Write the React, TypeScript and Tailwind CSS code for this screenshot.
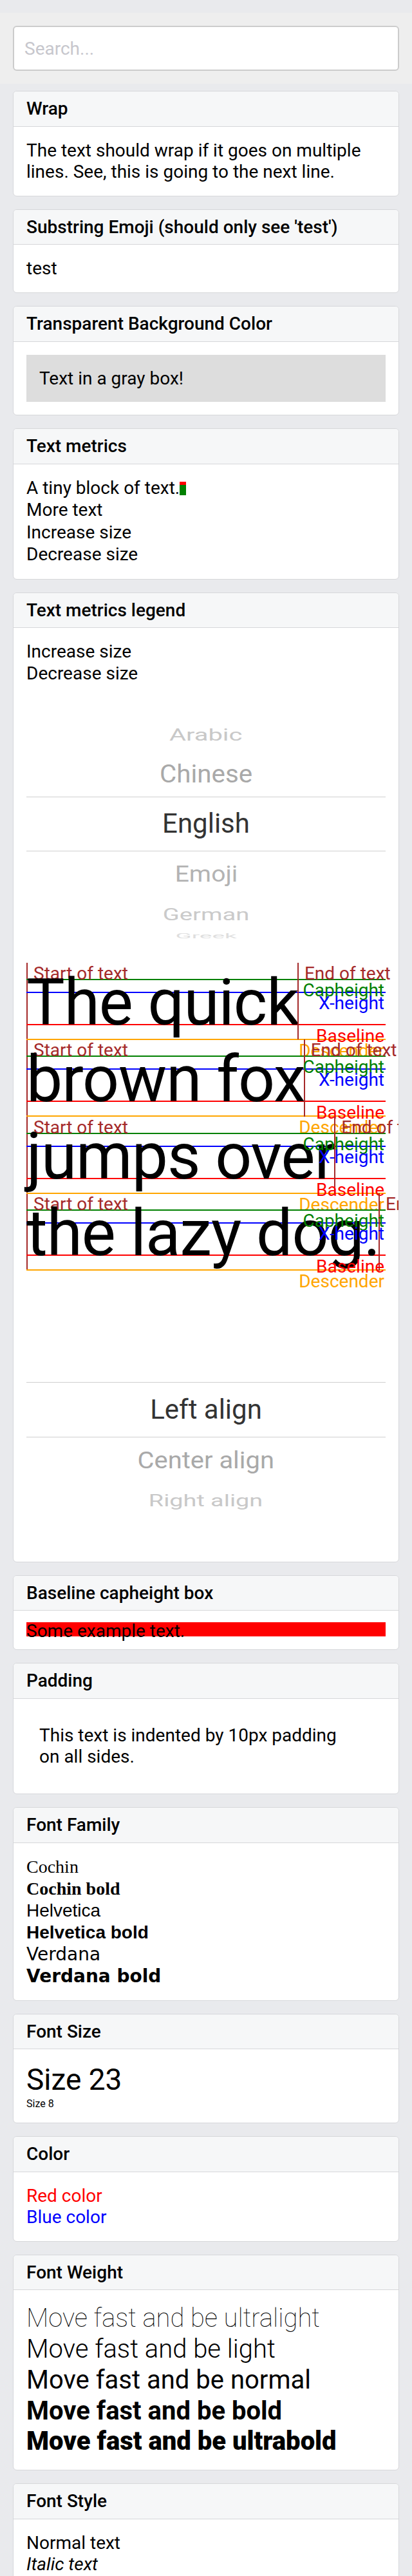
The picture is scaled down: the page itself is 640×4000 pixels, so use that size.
import React from "react";

const BODY = "p-[20px] text-[28px] leading-[33.6px]";

function Card({
  title,
  children,
  bodyClassName = BODY,
}: {
  title: string;
  children: React.ReactNode;
  bodyClassName?: string;
}) {
  return (
    <div className="mx-[20px] mb-[20px] overflow-hidden rounded-[6px] border border-[#d6d7da] bg-white">
      <div className="border-b border-[#d6d7da] bg-[#f6f7f8] px-[20px] py-[10px] text-[28px] font-medium leading-[33.6px] text-black">
        {title}
      </div>
      <div className={bodyClassName}>{children}</div>
    </div>
  );
}

function LanguagePicker() {
  return (
    <div className="flex h-[432px] flex-col text-[42px] leading-[50px]">
      <div className="h-[48px] shrink-0" />
      <div className="flex h-[60px] shrink-0 items-center justify-center">
        <span className="inline-block scale-x-[0.95] scale-y-[0.63] text-[#c8c8c8]">Arabic</span>
      </div>
      <div className="flex h-[66px] shrink-0 items-center justify-center">
        <span className="inline-block -translate-y-[2px] scale-x-[0.96] scale-y-[0.93] text-[#a9a9a9]">Chinese</span>
      </div>
      <div className="flex h-[85px] shrink-0 items-center justify-center border-y border-[#d0d0d0]">
        <span className="text-[#333333]">English</span>
      </div>
      <div className="flex h-[70px] shrink-0 items-center justify-center">
        <span className="inline-block scale-x-[0.93] scale-y-[0.84] text-[#b3b3b3]">Emoji</span>
      </div>
      <div className="flex h-[56px] shrink-0 items-center justify-center">
        <span className="inline-block scale-x-[0.91] scale-y-[0.63] text-[#cacaca]">German</span>
      </div>
      <div className="flex h-[10px] shrink-0 items-center justify-center">
        <span className="inline-block scale-x-[0.88] scale-y-[0.25] text-[#dedede]">Greek</span>
      </div>
    </div>
  );
}

function AlignPicker() {
  return (
    <div className="flex h-[432px] flex-col text-[42px] leading-[50px]">
      <div className="h-[173px] shrink-0" />
      <div className="flex h-[86px] shrink-0 items-center justify-center border-y border-[#d0d0d0]">
        <span className="text-[#333333]">Left align</span>
      </div>
      <div className="flex h-[70px] shrink-0 items-center justify-center">
        <span className="inline-block scale-x-[0.95] scale-y-[0.9] text-[#a9a9a9]">Center align</span>
      </div>
      <div className="flex h-[56px] shrink-0 items-center justify-center">
        <span className="inline-block scale-x-[0.9] scale-y-[0.63] text-[#c8c8c8]">Right align</span>
      </div>
    </div>
  );
}

const LINES = ["The quick", "brown fox", "jumps over", "the lazy dog."];

function MetricsDiagram() {
  return (
    <div className="relative">
      <div className="absolute bottom-0 left-0 top-0 w-[2px] bg-[#a52a2a]" />
      {LINES.map((t) => (
        <div key={t} className="relative h-[119.5px]">
          <div className="absolute left-0 right-0 top-[25px] h-[2px] bg-[#008000]" />
          <div className="absolute left-0 right-0 top-[45px] h-[2px] bg-[#0000ff]" />
          <div className="absolute left-0 right-0 top-[95px] h-[2px] bg-[#ff0000]" />
          <div className="absolute left-0 right-0 top-[118px] h-[2px] bg-[#ffa500]" />
          <div className="absolute left-[11px] top-0 whitespace-nowrap text-[28px] leading-[33.6px] text-[#a52a2a]">
            Start of text
          </div>
          <div className="relative h-[119.5px] w-fit whitespace-nowrap text-[100px] leading-[119.5px] tracking-[-1px] text-black">
            <span className="relative top-[2px] block">{t}</span>
            <div className="absolute right-0 top-0 h-[119.5px] w-[2px] bg-[#a52a2a]" />
            <div className="absolute left-full top-0 ml-[9px] whitespace-nowrap text-[28px] leading-[33.6px] tracking-normal text-[#a52a2a]">
              End of text
            </div>
          </div>
          <div className="absolute right-[2px] top-[26px] whitespace-nowrap text-[28px] leading-[33.6px] text-[#008000]">
            Capheight
          </div>
          <div className="absolute right-[2px] top-[46px] whitespace-nowrap text-[28px] leading-[33.6px] text-[#0000ff]">
            X-height
          </div>
          <div className="absolute right-[2px] top-[97px] whitespace-nowrap text-[28px] leading-[33.6px] text-[#ff0000]">
            Baseline
          </div>
          <div className="absolute right-[2px] top-[120px] whitespace-nowrap text-[28px] leading-[33.6px] text-[#ffa500]">
            Descender
          </div>
        </div>
      ))}
    </div>
  );
}

export default function App() {
  return (
    <div className="min-h-screen bg-[#e9eaed] pt-[20px] font-['Roboto',sans-serif] text-black">
      <div className="bg-[#eeeeee] p-[20px]">
        <input
          placeholder="Search..."
          className="block h-[70px] w-full rounded-[6px] border-2 border-[#cccccc] bg-white pl-[16px] text-[28px] outline-none placeholder:text-[#c7c7cd]"
        />
      </div>
      <div className="pt-[11px]">
        <Card title="Wrap">
          The text should wrap if it goes on multiple lines. See, this is going to the next line.
        </Card>
        <Card title="Substring Emoji (should only see 'test')">test</Card>
        <Card title="Transparent Background Color">
          <div className="bg-[#dddddd] p-[20px]">Text in a gray box!</div>
        </Card>
        <Card title="Text metrics" bodyClassName="p-[20px] text-[28px] leading-[34.5px]">
          <div>
            A tiny block of text.
            <span className="relative top-[2px] inline-block w-[10px] align-baseline">
              <span className="block h-[5px] bg-[#ff0000]" />
              <span className="block h-[16px] bg-[#008000]" />
            </span>
          </div>
          <div>More text</div>
          <div>Increase size</div>
          <div>Decrease size</div>
        </Card>
        <Card title="Text metrics legend">
          <div>Increase size</div>
          <div>Decrease size</div>
          <LanguagePicker />
          <MetricsDiagram />
          <AlignPicker />
        </Card>
        <Card title="Baseline capheight box">
          <div className="h-[22px] bg-[#ff0000]">
            <div className="-mt-[2px] whitespace-nowrap leading-[28px]">Some example text.</div>
          </div>
        </Card>
        <Card title="Padding">
          <div className="p-[20px]">
            This text is indented by 10px padding
            <br />
            on all sides.
          </div>
        </Card>
        <Card title="Font Family">
          <div className="font-['Liberation_Serif',serif] leading-[34px]">Cochin</div>
          <div className="font-['Liberation_Serif',serif] font-bold leading-[34px]">Cochin bold</div>
          <div className="font-['Liberation_Sans',sans-serif] leading-[34px]">Helvetica</div>
          <div className="font-['Liberation_Sans',sans-serif] font-bold leading-[34px]">Helvetica bold</div>
          <div className="font-['DejaVu_Sans',sans-serif] leading-[34px]">Verdana</div>
          <div className="font-['DejaVu_Sans',sans-serif] font-bold leading-[34px]">Verdana bold</div>
        </Card>
        <Card title="Font Size">
          <div className="text-[46px] leading-[55px]">Size 23</div>
          <div className="text-[16px] leading-[19px]">Size 8</div>
        </Card>
        <Card title="Color">
          <div className="text-[#ff0000]">Red color</div>
          <div className="text-[#0000ff]">Blue color</div>
        </Card>
        <Card title="Font Weight">
          <div className="text-[40px] font-thin leading-[47.7px]">Move fast and be ultralight</div>
          <div className="text-[40px] font-light leading-[47.7px]">Move fast and be light</div>
          <div className="text-[40px] font-normal leading-[47.7px]">Move fast and be normal</div>
          <div className="text-[40px] font-bold leading-[47.7px]">Move fast and be bold</div>
          <div className="text-[40px] font-black leading-[47.7px]">Move fast and be ultrabold</div>
        </Card>
        <Card title="Font Style">
          <div>Normal text</div>
          <div className="italic">Italic text</div>
        </Card>
      </div>
    </div>
  );
}
